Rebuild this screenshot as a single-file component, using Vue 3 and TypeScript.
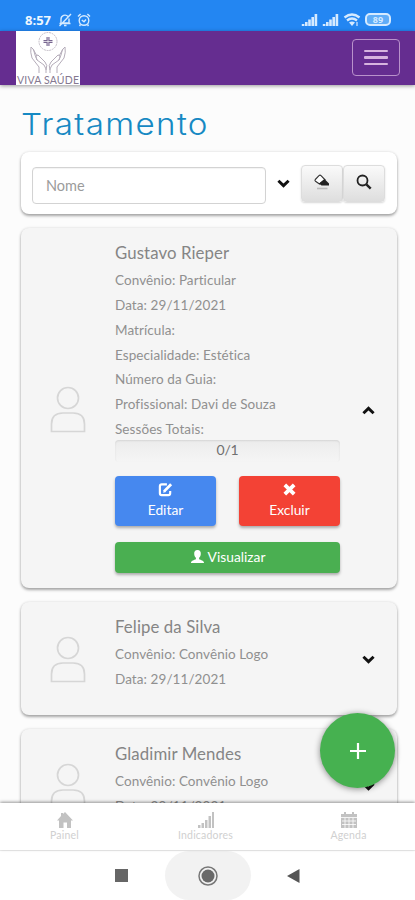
<script setup lang="ts">
interface Treatment {
  name: string
  details: string[]
  open: boolean
}

const treatments: Treatment[] = [
  {
    name: 'Gustavo Rieper',
    details: [
      'Convênio: Particular',
      'Data: 29/11/2021',
      'Matrícula:',
      'Especialidade: Estética',
      'Número da Guia:',
      'Profissional: Davi de Souza',
      'Sessões Totais:',
    ],
    open: true,
  },
  { name: 'Felipe da Silva', details: ['Convênio: Convênio Logo', 'Data: 29/11/2021'], open: false },
  { name: 'Gladimir Mendes', details: ['Convênio: Convênio Logo', 'Data: 29/11/2021'], open: false },
]
</script>

<template>
  <div class="screen">
    <header class="status">
      <span class="clock">8:57</span>
      <svg class="s-icon" viewBox="0 0 14 14" fill="none" stroke="currentColor" stroke-width="1.4">
        <path d="M3 10V6a4 4 0 0 1 7-2.5M11 5.500V10H4.500M1.500 10.500H12.500M6 12.500H8.500M1.500 13L13 1" />
      </svg>
      <svg class="s-icon" viewBox="0 0 14 14" fill="none" stroke="currentColor" stroke-width="1.400">
        <circle cx="7" cy="7.500" r="4.800" /><path d="M1 3.500L3.600 1M13 3.500L10.400 1M4.800 7L7 8.800L9 6.500M3.500 11.500L2.500 13M10.500 11.500L11.500 13" />
      </svg>
      <span class="spacer"></span>
      <svg v-for="n in 2" :key="n" class="signal" viewBox="0 0 17 12" fill="currentColor">
        <path d="M.8 10h2.600v2H.8zM4 8h2.600v4H4zM7.200 5.500h2.600V12H7.200zM10.400 3H13v9h-2.600zM13.600 0h2.600v12h-2.600z" />
      </svg>
      <svg class="wifi" viewBox="0 0 18 14" fill="none" stroke="currentColor" stroke-width="2.300">
        <path d="M1.500 4.500Q9-1.500 16.500 4.500M4 7.500Q9 3.500 14 7.500" /><path d="M6 9.500Q9 7.500 12 9.500L9 13z" fill="currentColor" stroke="none" /><path d="M14 9v4" stroke-width="1.200" />
      </svg>
      <span class="battery">89</span>
    </header>

    <nav class="navbar">
      <div class="brand">
        <svg viewBox="0 0 64 54" fill="none" stroke="#b5adba" stroke-width="1">
          <circle cx="32" cy="10.500" r="9" stroke-dasharray="2 .7" stroke-width=".8" />
          <path d="M32 6v9M27.500 10.500h9" stroke="#77658f" stroke-width="3" />
          <path d="M32 5v11M26.500 10.500h11" stroke="#fff" stroke-width=".7" />
          <path d="M23 42V36L16 27Q14 21 15 16Q18 17 19 24L21 29L28 34Q31 38 30 42M21 29Q19 24 22 24L29 31Q32 34 30 39M17 18L21 25" />
          <path d="M41 42V36L48 27Q50 21 49 16Q46 17 45 24L43 29L36 34Q33 38 34 42M43 29Q45 24 42 24L35 31Q32 34 34 39M47 18L43 25" />
          <text x="1" y="52.500" textLength="62" lengthAdjust="spacing">VIVA SAÚDE</text>
        </svg>
      </div>
      <button class="burger" aria-label="Menu"><i></i><i></i><i></i></button>
    </nav>

    <main class="content">
      <h1>Tratamento</h1>
      <section class="search card">
        <input type="text" placeholder="Nome" />
        <svg class="caret" viewBox="0 0 12 8"><path d="M1.300 1.500L6 6L10.700 1.500" /></svg>
        <div class="tools">
          <button aria-label="Limpar">
            <svg viewBox="0 0 18 18"><path d="M2.300 6.500L6 2.700Q7 1.700 8 2.700L12 6.800L6.500 11L2.500 8.200Q1.500 7.500 2.300 6.500z" fill="#fff" stroke="#333" stroke-width="1.100" /><path d="M11.500 6L16 10.500V12.500H8.500L6 10.500z" fill="#222" /><path d="M4 15.500h10.500" stroke="#bbb" stroke-width="1.600" /></svg>
          </button>
          <button aria-label="Buscar">
            <svg viewBox="0 0 18 18" fill="none" stroke="#222"><circle cx="7.500" cy="7.500" r="5" stroke-width="1.800" /><path d="M11.300 11.300L15.700 15.700" stroke-width="2.400" /></svg>
          </button>
        </div>
      </section>

      <article v-for="t in treatments" :key="t.name" class="card item" :class="{ open: t.open }">
        <div class="avatar">
          <svg viewBox="0 0 36 48" fill="none" stroke="#d6d6d6" stroke-width="1.700">
            <circle cx="18" cy="12" r="10.500" /><path d="M1.500 45.500V38Q1.500 27 13 27H23Q34.500 27 34.500 38V45.500z" />
          </svg>
        </div>
        <div class="body">
          <h2>{{ t.name }}</h2>
          <p v-for="d in t.details" :key="d">{{ d }}</p>
          <template v-if="t.open">
            <div class="progress">0/1</div>
            <div class="actions">
              <button class="btn edit">
                <svg viewBox="0 0 16 16" fill="none" stroke="#fff"><path d="M9.500 2.500H4Q2 2.500 2 4.500V12Q2 14 4 14H11Q13 14 13 12V9.500" stroke-width="2.300" /><path d="M6.500 10L14 2.500" stroke-width="3" /><path d="M5.500 11.500L6.200 8.500L8.500 10.700z" fill="#fff" stroke="none" /></svg>
                <span>Editar</span>
              </button>
              <button class="btn remove">
                <svg viewBox="0 0 16 16"><path d="M3 3L13 13M13 3L3 13" stroke="#fff" stroke-width="4" /></svg>
                <span>Excluir</span>
              </button>
            </div>
            <button class="btn view">
              <svg viewBox="0 0 16 16" fill="#fff"><path d="M8 1C5.300 1 4.200 3 4.500 5.500C4.700 7.500 5.500 8.500 6.300 9.300V10.800C4.500 11.700 1 12 1 15H15C15 12 11.500 11.700 9.700 10.800V9.300C10.500 8.500 11.300 7.500 11.500 5.500C11.800 3 10.700 1 8 1z" /></svg>
              <span>Visualizar</span>
            </button>
          </template>
        </div>
        <div class="toggle">
          <svg class="caret" viewBox="0 0 12 8"><path :d="t.open ? 'M1.300 6.500L6 2L10.700 6.500' : 'M1.300 1.500L6 6L10.700 1.500'" /></svg>
        </div>
      </article>
    </main>

    <button class="fab" aria-label="Adicionar"><svg viewBox="0 0 16 16"><path d="M8 0V16M0 8H16" stroke="#fff" stroke-width="2.200" /></svg></button>

    <footer class="tabs">
      <div class="tab">
        <svg viewBox="0 0 18 18" fill="#c2c2c2"><path d="M9 1L17 9.500H15V17H11V11.500H7.500V17H3V9.500H1L5 5V2H7V3z" /></svg>
        <span>Painel</span>
      </div>
      <div class="tab">
        <svg viewBox="0 0 18 18" fill="#c2c2c2"><path d="M1 14h2.500v3H1zM4.500 12H7v5H4.500zM8 9h2.500v8H8zM11.500 5H14v12h-2.500zM15 1h2v16h-2z" /></svg>
        <span>Indicadores</span>
      </div>
      <div class="tab">
        <svg viewBox="0 0 18 18"><path d="M1 3H17V17H1zM4 1h2v4H4zM12 1h2v4h-2z" fill="#c2c2c2" /><path d="M1 6.500H17M2 10H16M2 13.500H16M5 7V17M9 7V17M13 7V17" stroke="#fff" stroke-width=".8" /></svg>
        <span>Agenda</span>
      </div>
    </footer>

    <div class="system">
      <span class="sq"></span>
      <span class="home"><svg viewBox="0 0 22 22"><circle cx="11" cy="11" r="9" fill="none" stroke="#777" stroke-width="1.500" /><circle cx="11" cy="11" r="6.500" fill="#6a6a6a" /></svg></span>
      <svg class="back" viewBox="0 0 13 14"><path d="M0 7L12.500 0V14z" fill="#555" /></svg>
    </div>
  </div>
</template>

<style>
body { margin: 0; }
</style>

<style scoped>
* { box-sizing: border-box; }
.screen { position: relative; width: 415px; height: 900px; display: flex; flex-direction: column; overflow: hidden; background: #fcfcfc; font-family: Lato, sans-serif; color: #858585; }
button { font-family: inherit; padding: 0; }
svg { display: block; }
.status { flex: none; height: 31px; padding: 8px 24px 0 25px; display: flex; align-items: center; background: #2386f2; color: #d5eaff; }
.clock { font: 700 13px "Open Sans", sans-serif; width: 33px; color: #eef7ff; }
.s-icon { width: 14px; height: 14px; margin-right: 5px; }
.spacer { flex: 1; }
.signal { width: 17px; height: 12px; margin-right: 4px; }
.wifi { width: 18px; height: 14px; margin-right: 4px; }
.battery { width: 26px; height: 13px; border: 2px solid #d5eaff; border-radius: 5px; display: grid; place-items: center; font: 700 9px/9px "Open Sans", sans-serif; background: #61adf8; }
.navbar { flex: none; height: 54px; padding: 0 15px 0 16px; display: flex; justify-content: space-between; background: #652d90; box-shadow: 0 1px 4px rgba(0,0,0,.4); z-index: 1; }
.brand { width: 64px; height: 54px; background: #fff; }
.brand svg { width: 64px; height: 54px; }
.brand text { font: 10.500px Lato, sans-serif; fill: #857890; stroke: none; }
.burger { width: 48px; height: 37px; margin-top: 8px; border: 1.500px solid #b992cb; border-radius: 4px; background: none; display: flex; flex-direction: column; align-items: center; justify-content: center; gap: 4px; }
.burger i { width: 24px; height: 2.500px; background: #d7b4df; border-radius: 1px; }
.content { flex: 1; min-height: 0; overflow: hidden; padding: 19px 18px 0 21px; display: flex; flex-direction: column; gap: 14px; }
h1 { flex: none; align-self: flex-start; margin: 0; height: 34px; padding-top: 1px; font: 300 30px/38px Inter, sans-serif; letter-spacing: 1.200px; color: #1689c3; transform: scaleX(1.105); transform-origin: left; }
.card { flex: none; border-radius: 8px; box-shadow: 0 2px 3px rgba(0,0,0,.32), 0 0 3px rgba(0,0,0,.12); }
.search { height: 62px; padding: 0 11px; display: flex; align-items: center; background: #fff; }
.search input { width: 234px; height: 37px; margin: 5px 11px 0 0; padding: 0 13px; border: 1px solid #d3d3d3; border-radius: 4px; font: 14.500px Lato, sans-serif; background: #fff; box-shadow: inset 0 1px 1px rgba(0,0,0,.05); }
.search input::placeholder { color: #9b9b9b; opacity: 1; }
.caret { width: 13px; height: 9px; fill: none; stroke: #111; stroke-width: 2.700; }
.tools { display: flex; margin: 0 0 0 11px; }
.tools button { width: 42px; height: 37px; display: grid; place-items: center; border: 1px solid #ddd; border-radius: 4px; background: linear-gradient(#fafafa, #dedede); box-shadow: 0 1px 2px rgba(0,0,0,.16); }
.tools svg { width: 18px; height: 18px; margin-top: -2px; }
.item { height: 113px; padding-top: 13px; display: grid; grid-template-columns: 94px 225px 57px; background: #f5f5f5; }
.item.open { height: 360px; }
.avatar { padding-left: 29px; align-self: center; margin-top: -10px; }
.open .avatar { margin-top: -10px; }
.avatar svg { width: 36px; height: 48px; }
.toggle { align-self: center; justify-self: center; margin-top: -11px; }
.open .toggle { margin-top: -9px; }
h2 { margin: 0 0 3px; font-weight: 400; font-size: 16.800px; line-height: 24px; letter-spacing: .1px; }
p { margin: 0; font-size: 13.500px; line-height: 24.850px; letter-spacing: .08px; white-space: nowrap; color: #909090; }
.progress { height: 22px; margin-top: -2px; border-radius: 4px; text-align: center; font-size: 14px; line-height: 20px; letter-spacing: -.2px; color: #707070; background: linear-gradient(#ececec, #f5f5f5); box-shadow: inset 0 1px 2px rgba(0,0,0,.1); }
.actions { display: grid; grid-template-columns: 101px 101px; justify-content: space-between; margin-top: 14px; }
.btn { border: 0; border-radius: 4px; color: #fff; font-size: 13.800px; line-height: 19px; box-shadow: 0 2px 3px rgba(0,0,0,.3); display: flex; align-items: center; justify-content: center; }
.btn svg { width: 15px; height: 15px; }
.actions .btn { height: 50px; flex-direction: column; gap: 3px; }
.edit { background: #4688ef; }
.remove { background: #f34235; }
.view { width: 225px; height: 31px; margin-top: 16px; padding-bottom: 2px; gap: 3px; background: #4aaf51; }
.fab { position: absolute; left: 320px; top: 713px; width: 75px; height: 75px; border: 0; border-radius: 50%; display: grid; place-items: center; background: #46b150; box-shadow: 0 1px 6px rgba(0,0,0,.45); }
.fab svg { width: 16px; height: 16px; }
.tabs { flex: none; height: 47px; display: grid; grid-template-columns: 129px 1fr 133px; background: #fff; box-shadow: 0 -1px 3px rgba(0,0,0,.4); z-index: 1; }
.tab { display: flex; flex-direction: column; align-items: center; padding-top: 8px; font-size: 10.500px; line-height: 13px; letter-spacing: .2px; color: #d0d0d0; }
.tab svg { width: 18px; height: 18px; }
.system { flex: none; height: 50px; border-top: 1px solid #f1f1f1; padding: 0 115px; display: flex; align-items: center; justify-content: space-between; background: #fff; }
.sq { width: 13px; height: 13px; background: #666; }
.home { width: 86px; height: 49px; border-radius: 25px; display: grid; place-items: center; background: #f2f2f2; }
.home svg { width: 22px; height: 22px; }
.back { width: 13px; height: 14px; }
</style>
